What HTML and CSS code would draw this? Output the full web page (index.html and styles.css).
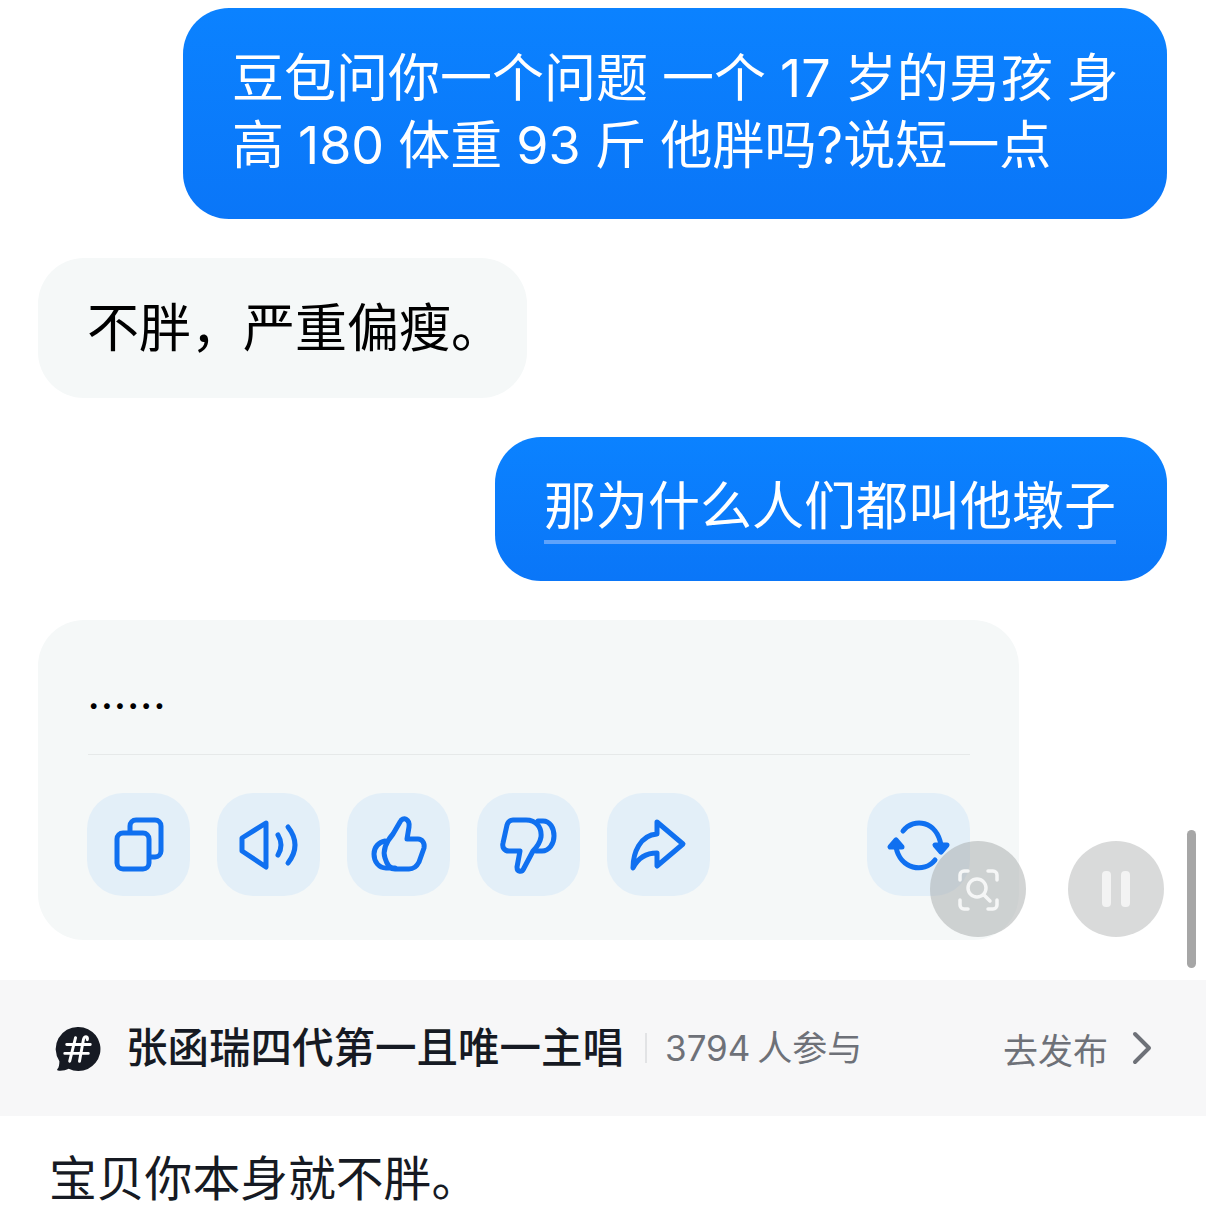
FILE: index.html
```html
<!DOCTYPE html>
<html lang="en">
<head>
    <meta charset="UTF-8">
    <meta name="viewport" content="width=device-width, initial-scale=1.0">
    <title>Chat</title>
    <link rel="stylesheet" href="styles.css">
</head>
<body>
    <!-- Chat messages -->
    <div class="chat">
        <div class="bubble bubble-user bubble-first">豆包问你一个问题 一个 17 岁的男孩 身高 180 体重 93 斤 他胖吗?说短一点</div>
        <div class="bubble bubble-bot bubble-short">不胖，严重偏瘦。</div>
        <div class="bubble bubble-user bubble-spoken"><span class="spoken-text">那为什么人们都叫他墩子</span></div>

        <div class="answer-card">
            <div class="answer-text">......</div>
            <div class="answer-divider"></div>
            <div class="answer-actions">
                <div class="action-group">
                    <button class="action-button" aria-label="copy">
                        <svg viewBox="0 0 104 104" class="action-icon">
                            <rect x="30" y="40" width="32" height="36" rx="6"/>
                            <path d="M43 39V33a6 6 0 0 1 6-6H68a6 6 0 0 1 6 6V58a6 6 0 0 1-6 6H63"/>
                        </svg>
                    </button>
                    <button class="action-button" aria-label="read">
                        <svg viewBox="0 0 104 104" class="action-icon">
                            <path d="M49 30 25 45V58L49 74Z"/>
                            <path d="M61 42Q67 52 61 62"/>
                            <path d="M71 34Q85 52 71 70"/>
                        </svg>
                    </button>
                    <button class="action-button" aria-label="like">
                        <svg viewBox="0 0 104 104" class="action-icon">
                            <path d="M48 76H62C67 76 70 73 72 69L77 55C78 50 75 46 71 46H60L62 34C63 26 56 23 53 29L46 41C40 48 35 56 38 65C40 72 43 76 48 76Z"/>
                            <path d="M38 48C32 49 27 54 27 61C27 69 32 75 39 75H48"/>
                        </svg>
                    </button>
                    <button class="action-button" aria-label="dislike">
                        <svg viewBox="0 0 104 104" class="action-icon">
                            <path d="M36 27H49C59 27 65 34 64 44C63 50 59 55 56 58L47 75C45 80 40 79 40 74L43 58H32C27 58 25 54 26 50L30 32C31 29 33 27 36 27Z"/>
                            <path d="M61 28H66C73 28 77 35 77 43C77 51 72 58 65 58H59"/>
                        </svg>
                    </button>
                    <button class="action-button" aria-label="share">
                        <svg viewBox="0 0 104 104" class="action-icon">
                            <path d="M50 29 76 51 50 73V60C39 60 31 65 26 75C26 60 33 42 50 41Z"/>
                        </svg>
                    </button>
                </div>
                <button class="action-button" aria-label="regenerate">
                    <svg viewBox="0 0 104 104" class="action-icon">
                        <path d="M36 38C47 24 70 28 74 52"/>
                        <path d="M68 67C57 81 33 76 29 54"/>
                        <path class="icon-fill" d="M68 52H80L74 59Z"/>
                        <path class="icon-fill" d="M23 54H35L29 47Z"/>
                    </svg>
                </button>
            </div>
        </div>
    </div>

    <!-- Topic bar -->
    <div class="topic-bar">
        <svg viewBox="0 0 48 48" class="topic-logo">
            <path class="logo-bubble" d="M24 2A22.500 22.500 0 1 1 14 44.700C11 46.500 6 47 3 46.500C2 46.300 2 45.500 2.500 45C4 43.500 4.500 40 4.500 37A22.500 22.500 0 0 1 24 2Z"/>
            <path class="logo-mark" d="M12 20H36M10 29H34M21 13 15 37M33 15C34 11 30 11 29 15L25 37"/>
        </svg>
        <span class="topic-title">张函瑞四代第一且唯一主唱</span>
        <span class="topic-count">3794 人参与</span>
        <span class="topic-link">去发布</span>
        <svg viewBox="0 0 24 40" class="topic-arrow"><path d="M5 6 19 20 5 34"/></svg>
    </div>

    <!-- Comment line -->
    <div class="comment-text">宝贝你本身就不胖。</div>

    <!-- Floating buttons -->
    <div class="float-button float-lens">
        <svg viewBox="0 0 96 96" class="lens-icon">
            <path d="M30 39V34a4 4 0 0 1 4-4H38M58 30H63a4 4 0 0 1 4 4V39M67 59V64a4 4 0 0 1-4 4H58M38 68H34a4 4 0 0 1-4-4V59"/>
            <circle cx="47" cy="47" r="9"/>
            <path d="M54 54 60 60"/>
        </svg>
    </div>
    <div class="float-button float-pause">
        <span class="pause-bar"></span>
        <span class="pause-bar"></span>
    </div>
    <div class="scroll-thumb"></div>
</body>
</html>
```

FILE: styles.css
```css
html, body {
    margin: 0;
    padding: 0;
    height: 100%;
    overflow: hidden;
    background: #fff;
    font-family: "Inter", "Noto Sans CJK SC", sans-serif;
}
.chat {
    display: flex;
    flex-direction: column;
    padding: 8px 39px 40px 38px;
}
.bubble {
    box-sizing: border-box;
    font-size: 52px;
    line-height: 68px;
    border-radius: 46px;
}
.bubble-user {
    align-self: flex-end;
    background: linear-gradient(180deg, #0b82ff, #0a76f8);
    color: #fff;
}
.bubble-bot {
    align-self: flex-start;
    background: #f5f8f8;
    color: #000;
}
.bubble-first {
    width: 984px;
    height: 211px;
    padding: 37px 40px 0 49px;
    margin-bottom: 39px;
    line-height: 67px;
    word-spacing: -0.600px;
}
.bubble-short {
    width: 489px;
    height: 140px;
    padding: 37px 0 0 49px;
    margin-bottom: 39px;
}
.bubble-spoken {
    width: 672px;
    height: 144px;
    padding: 36px 0 0 49px;
    margin-bottom: 39px;
}
.spoken-text {
    display: inline-block;
    line-height: 66px;
    height: 66px;
    border-bottom: 4px solid #5fa3fb;
    white-space: nowrap;
}
.answer-card {
    box-sizing: border-box;
    width: 981px;
    height: 320px;
    padding: 43px 49px 0 50px;
    background: #f5f8f8;
    border-radius: 46px;
}
.answer-text {
    height: 91px;
    font-size: 34px;
    font-weight: 700;
    line-height: 68px;
    letter-spacing: 1.800px;
    color: #000;
}
.answer-divider {
    height: 1px;
    background: #e6e9e9;
}
.answer-actions {
    display: flex;
    justify-content: space-between;
    margin-top: 38px;
    margin-left: -1px;
}
.action-group {
    display: flex;
    gap: 27px;
}
.action-button {
    width: 103px;
    height: 103px;
    padding: 0;
    border: 0;
    border-radius: 36px;
    background: #e3eff8;
}
.action-icon {
    display: block;
    width: 104px;
    height: 104px;
    fill: none;
    stroke: #1070f0;
    stroke-width: 5;
    stroke-linecap: round;
    stroke-linejoin: round;
}
.icon-fill {
    fill: #1070f0;
}
.topic-bar {
    display: flex;
    align-items: center;
    height: 136px;
    padding: 0 52px 0 55px;
    background: #f7f7f8;
}
.topic-logo {
    flex: none;
    width: 47px;
    height: 47px;
    margin-right: 24px;
}
.logo-bubble {
    fill: #161a23;
}
.logo-mark {
    fill: none;
    stroke: #fff;
    stroke-width: 3;
    stroke-linecap: round;
}
.topic-title {
    font-size: 41.500px;
    font-weight: 500;
    line-height: 50px;
    color: #161a23;
    white-space: nowrap;
}
.topic-count {
    margin-left: 21px;
    padding-left: 18px;
    border-left: 2px solid #e2e3e5;
    font-size: 35px;
    line-height: 30px;
    word-spacing: -3px;
    color: #6e7178;
    white-space: nowrap;
}
.topic-link {
    margin-left: auto;
    font-size: 35px;
    color: #6e7178;
    white-space: nowrap;
}
.topic-arrow {
    width: 24px;
    height: 40px;
    margin-left: 22px;
    fill: none;
    stroke: #6e7178;
    stroke-width: 4;
    stroke-linecap: round;
    stroke-linejoin: round;
}
.comment-text {
    padding: 30px 0 0 49px;
    font-size: 47.800px;
    line-height: 66px;
    color: #161a23;
    white-space: nowrap;
}
.float-button {
    position: absolute;
    top: 841px;
    width: 96px;
    height: 96px;
    border-radius: 50%;
    background: rgba(150, 153, 153, 0.36);
}
.float-lens {
    left: 930px;
    background: rgba(165, 170, 170, 0.5);
}
.float-pause {
    left: 1068px;
    display: flex;
    justify-content: center;
    align-items: center;
    gap: 10px;
}
.lens-icon {
    display: block;
    width: 96px;
    height: 96px;
    fill: none;
    stroke: #f5f6f6;
    stroke-width: 3.500;
    stroke-linecap: round;
}
.pause-bar {
    width: 9px;
    height: 36px;
    border-radius: 4px;
    background: #f3f3f3;
}
.scroll-thumb {
    position: absolute;
    top: 830px;
    left: 1187px;
    width: 9px;
    height: 138px;
    border-radius: 5px;
    background: #a6a6a6;
}
```
